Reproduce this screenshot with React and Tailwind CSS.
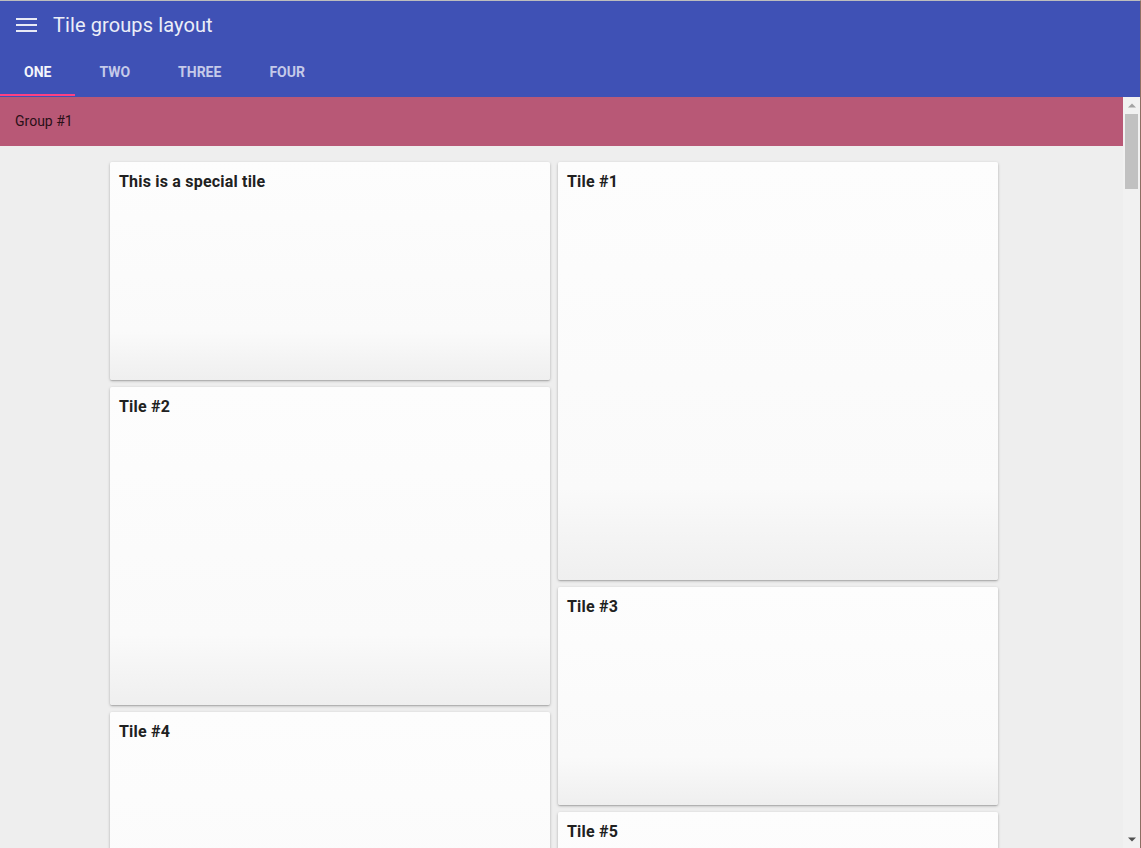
import React, { useState } from 'react';

const tabs = ['One', 'Two', 'Three', 'Four'];

const Tile = ({ title, h }) => (
  <div
    className={`${h} rounded-[2px] bg-[linear-gradient(to_bottom,#fdfdfd_0%,#fafafa_78%,#efefef_100%)] shadow-[0_1px_3px_rgba(0,0,0,0.25),0_1px_1px_rgba(0,0,0,0.12)] px-[9px] pt-[11px]`}
  >
    <h3 className="text-[16px] font-bold text-[#212121] leading-[18px] tracking-[0.2px]">{title}</h3>
  </div>
);

// classic browser scrollbar beside the scrolling area
const Scrollbar = () => (
  <div className="w-[17px] shrink-0 flex flex-col bg-[#f1f1f1]">
    <div className="h-[17px] flex items-center justify-center">
      <svg width="8" height="5" viewBox="0 0 8 5">
        <path d="M0 4.5 L4 0.5 L8 4.5 Z" fill="#a3a3a3" />
      </svg>
    </div>
    <div className="h-[75px] mx-[2px] bg-[#c1c1c1]" />
    <div className="flex-1" />
    <div className="h-[17px] flex items-center justify-center">
      <svg width="8" height="5" viewBox="0 0 8 5">
        <path d="M0 0.5 L8 0.5 L4 4.5 Z" fill="#505050" />
      </svg>
    </div>
  </div>
);

const App = () => {
  const [active, setActive] = useState(0);

  return (
    <div className="w-[1141px] h-[848px] flex flex-col border-t border-[#bdbdbd] border-r border-r-[#8d6e63] font-['Roboto','Liberation_Sans',sans-serif] overflow-hidden">
      {/* App bar */}
      <header className="bg-[#3f51b5] shrink-0">
        <div className="h-[47px] flex items-center pl-4">
          <svg width="22" height="16" viewBox="0 0 22 16" className="text-[#e8eaf6]">
            <rect x="0" y="1" width="21" height="2" fill="currentColor" />
            <rect x="0" y="7" width="21" height="2" fill="currentColor" />
            <rect x="0" y="13" width="21" height="2" fill="currentColor" />
          </svg>
          <h1 className="ml-[15px] text-[20px] text-[#eceef8] tracking-[0.1px]">Tile groups layout</h1>
        </div>
        <nav className="h-[49px] flex">
          {tabs.map((t, i) => (
            <button
              key={t}
              onClick={() => setActive(i)}
              className={`px-6 h-full flex items-center text-[14px] font-bold uppercase relative ${
                i === active ? 'text-[#f4f5fb]' : 'text-[#c5cae9]'
              }`}
            >
              {t}
              {i === active && <span className="absolute left-0 right-0 bottom-[1px] h-[2px] bg-[#ff4081]" />}
            </button>
          ))}
        </nav>
      </header>

      <div className="flex-1 flex min-h-0">
        {/* Scrolling content */}
        <main className="flex-1 overflow-hidden bg-[#eeeeee]">
          <div className="h-[49px] bg-[#b85876] flex items-center pl-[15px] text-[14px] text-[#2a1018]">
            Group #1
          </div>
          <div className="flex gap-2 pl-[110px] pt-4 pb-4">
            <div className="w-[440px] flex flex-col gap-[7px]">
              <Tile title="This is a special tile" h="h-[218px]" />
              <Tile title="Tile #2" h="h-[318px]" />
              <Tile title="Tile #4" h="h-[318px]" />
            </div>
            <div className="w-[440px] flex flex-col gap-[7px]">
              <Tile title="Tile #1" h="h-[418px]" />
              <Tile title="Tile #3" h="h-[218px]" />
              <Tile title="Tile #5" h="h-[218px]" />
            </div>
          </div>
        </main>
        <Scrollbar />
      </div>
    </div>
  );
};

export default App;
